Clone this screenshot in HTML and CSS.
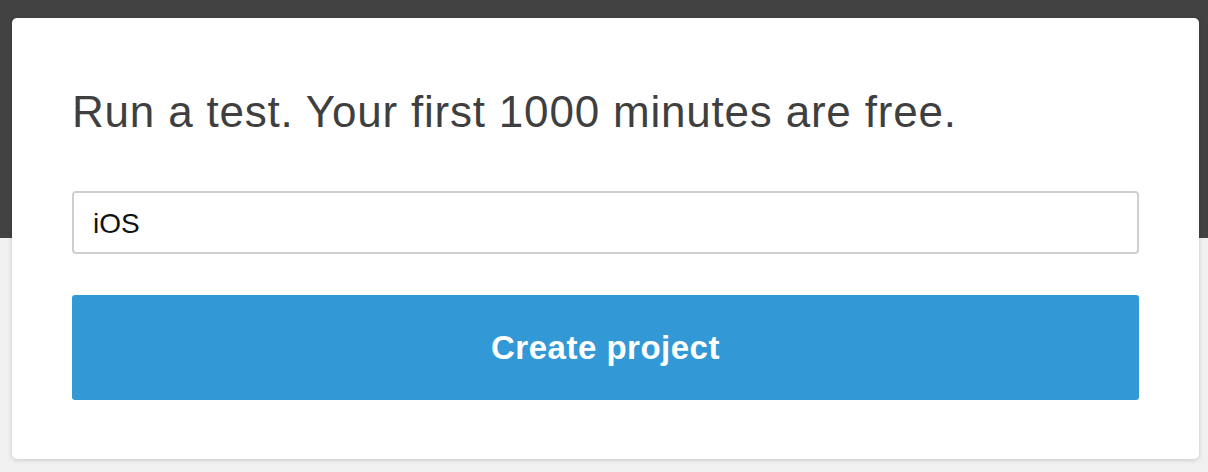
FILE: index.html
```html
<!DOCTYPE html>
<html>
<head>
<meta charset="utf-8">
<link rel="stylesheet" href="styles.css">
</head>
<body>
<div class="page">
  <div class="card">
    <h1 class="title">Run a test. Your first 1000 minutes are free.</h1>
    <input class="field" type="text" value="iOS">
    <button class="btn">Create project</button>
  </div>
</div>
</body>
</html>
```
FILE: styles.css
```css
html, body {
  margin: 0;
  padding: 0;
}
body {
  width: 1208px;
  height: 472px;
  overflow: hidden;
  background: linear-gradient(to bottom, #424242 0, #424242 238px, #f0f0f0 238px, #f0f0f0 100%);
  font-family: "Liberation Sans", Arial, Helvetica, sans-serif;
}
.page {
  padding: 18px 9px 0 12px;
}
.card {
  box-sizing: border-box;
  width: 1187px;
  height: 441px;
  background: #fff;
  border-radius: 5px;
  box-shadow: 0 1px 4px rgba(0, 0, 0, 0.18);
  padding: 68px 60px 0 60px;
  display: flex;
  flex-direction: column;
}
.title {
  margin: 0;
  font-weight: normal;
  font-size: 44px;
  letter-spacing: 0.8px;
  line-height: 52px;
  color: #3f3f3f;
}
.field {
  box-sizing: border-box;
  margin-top: 53px;
  height: 63px;
  width: 100%;
  border: 2px solid #cfcfcf;
  border-radius: 4px;
  padding: 2px 19px 0 19px;
  font-family: "Liberation Sans", Arial, sans-serif;
  font-size: 28px;
  color: #111;
  outline: none;
}
.btn {
  margin-top: 41px;
  height: 105px;
  width: 100%;
  border: 0;
  border-radius: 3px;
  background: #3399d6;
  color: #fff;
  font-family: "Liberation Sans", Arial, sans-serif;
  font-weight: bold;
  font-size: 33px;
  letter-spacing: 0.5px;
  padding: 0;
}
```
